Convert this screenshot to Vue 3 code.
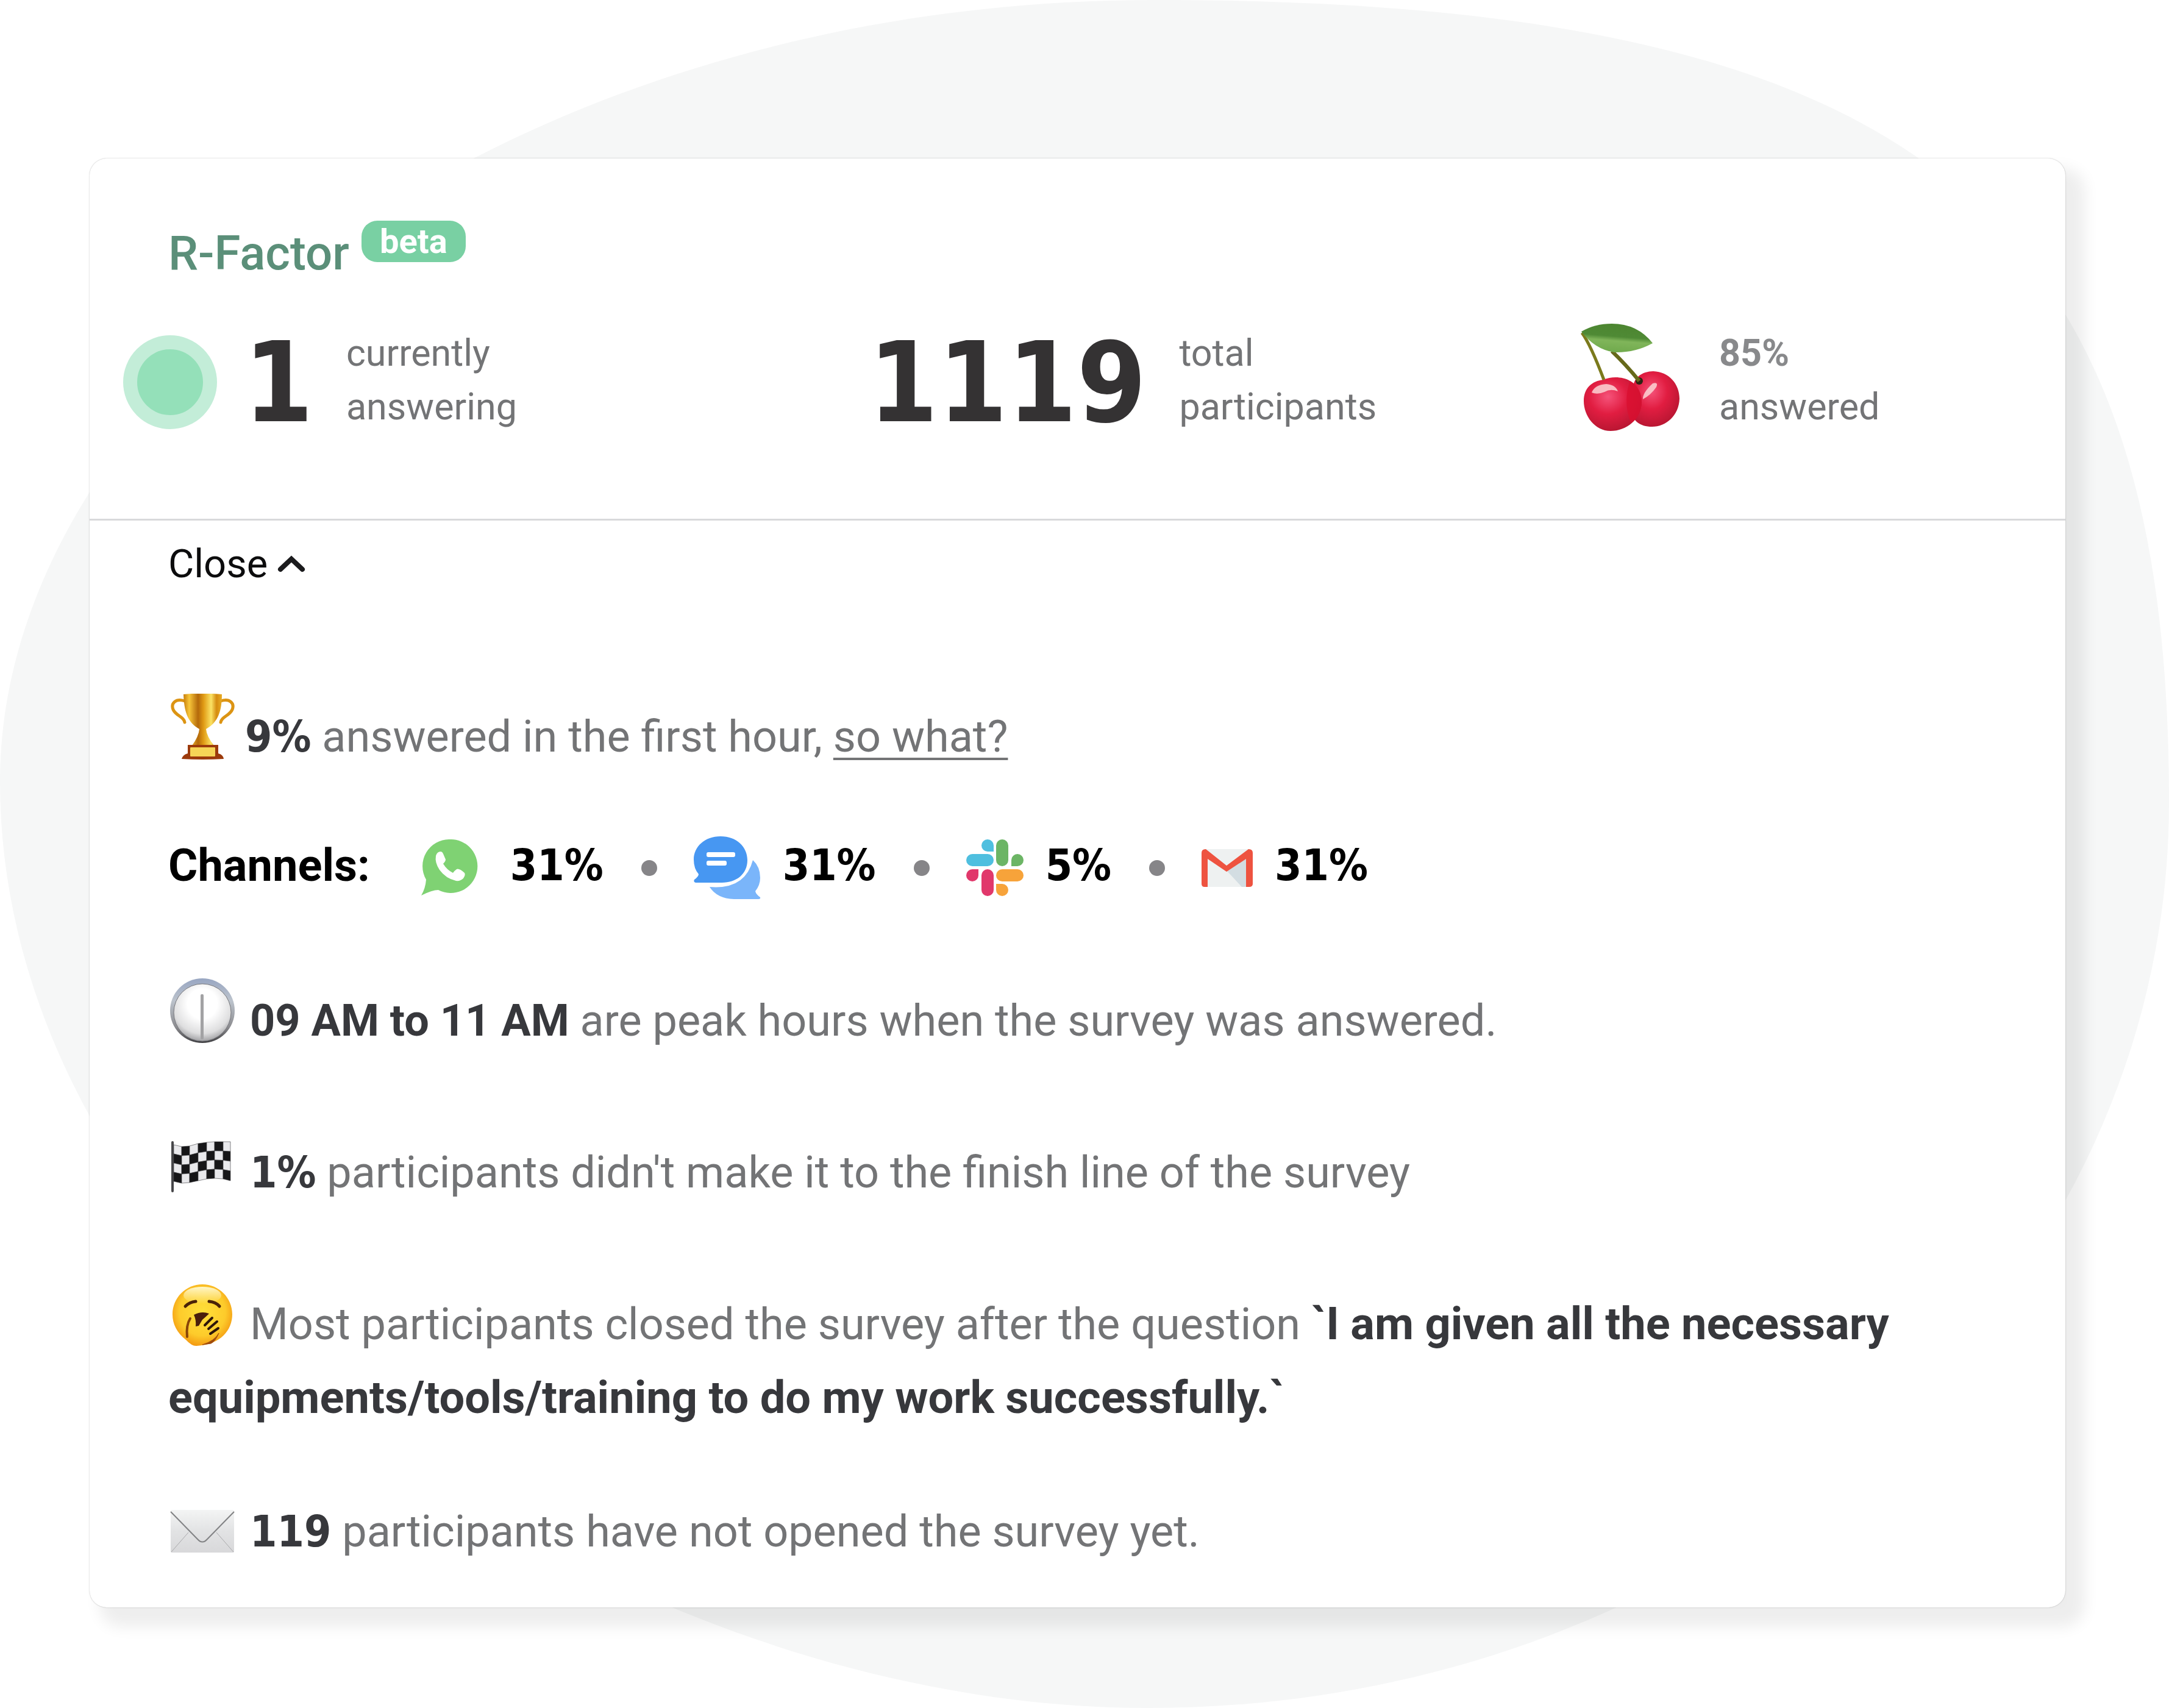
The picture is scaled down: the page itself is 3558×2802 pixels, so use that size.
<template>
  <div class="page">
    <svg class="blob" viewBox="0 0 1568 1235" preserveAspectRatio="none" aria-hidden="true">
      <path
        d="M0 565 C0 280 365 0 835 0 C1390 0 1568 157 1568 580 C1568 942 1238 1235 830 1235 C445 1235 0 935 0 565 Z"
        fill="#f6f7f7"
      />
    </svg>

    <main class="card">
      <header class="card-header">
        <div class="title-row">
          <h1>R-Factor</h1>
          <span class="badge">beta</span>
        </div>

        <div class="stats">
          <div class="stat live">
            <span class="pulse"></span>
            <span class="number">1</span>
            <p class="label">currently<br />answering</p>
          </div>
          <div class="stat">
            <span class="number">1119</span>
            <p class="label">total<br />participants</p>
          </div>
          <div class="stat">
            <svg class="cherry" viewBox="0 0 164 178" aria-hidden="true">
              <defs>
                <linearGradient id="leaf" x1="0.6" y1="0" x2="0.4" y2="1">
                  <stop offset="0" stop-color="#4c8530" />
                  <stop offset="0.45" stop-color="#4f8a35" />
                  <stop offset="0.6" stop-color="#80b55a" />
                  <stop offset="1" stop-color="#6fa94c" />
                </linearGradient>
                <radialGradient id="fruit" cx="0.42" cy="0.36" r="0.65">
                  <stop offset="0" stop-color="#f5537a" />
                  <stop offset="0.5" stop-color="#e11d41" />
                  <stop offset="1" stop-color="#b91632" />
                </radialGradient>
              </defs>
              <path d="M87 108 C86 90 102 79 120 79 C146 80 163 100 163 124 C162 152 141 170 118 170 C98 170 84 160 84 140 Z" fill="url(#fruit)" />
              <path d="M6 128 C6 106 20 95 38 93 C52 87 70 88 82 95 C95 102 101 116 101 130 C100 158 76 177 50 177 C24 177 6 152 6 128 Z" fill="url(#fruit)" />
              <path d="M82 95 C95 102 101 116 101 130 C100 146 94 157 84 164 C74 145 74 115 82 95 Z" fill="#da0f30" opacity="0.8" />
              <path d="M19 114 Q24 101 43 100 Q58 101 62 112 Q50 107 40 113 Q28 118 19 114 Z" fill="#fbd3d5" opacity="0.85" />
              <path d="M103 125 Q102 115 119 99 Q129 96 125 105 Q116 118 103 125 Z" fill="#fbd3d5" opacity="0.85" />
              <ellipse cx="97" cy="95" rx="6" ry="6" fill="#2c2413" />
              <path d="M3 16 Q17 35 39 93" fill="none" stroke="#7b7a1c" stroke-width="5" />
              <path d="M52 46 Q75 68 97 95" fill="none" stroke="#66691a" stroke-width="6" />
              <path d="M2 14 Q24 1 52 1 Q94 1 119 33 Q90 49 56 48 Q24 43 2 14 Z" fill="url(#leaf)" />
            </svg>
            <p class="label"><b>85%</b><br />answered</p>
          </div>
        </div>
      </header>

      <section class="details">
        <button type="button" class="toggle" @click="open = !open">
          {{ open ? 'Close' : 'Open' }}
          <svg class="chevron" :class="{ flipped: !open }" viewBox="0 0 46 28" aria-hidden="true">
            <path d="M5 23 L23 6 L41 23" fill="none" stroke="#1b1b1d" stroke-width="8" stroke-linecap="round" />
          </svg>
        </button>

        <div v-if="open" class="facts">
          <p class="fact first">
            <svg class="emoji" viewBox="0 0 108 108" aria-hidden="true">
              <defs>
                <linearGradient id="gold">
                  <stop offset="0" stop-color="#c77d0a" />
                  <stop offset="0.15" stop-color="#f7c63a" />
                  <stop offset="0.38" stop-color="#b4690a" />
                  <stop offset="0.52" stop-color="#e09a14" />
                  <stop offset="0.72" stop-color="#fbe264" />
                  <stop offset="0.86" stop-color="#d58c10" />
                  <stop offset="1" stop-color="#e8ac25" />
                </linearGradient>
              </defs>
              <path d="M25 12 C10 7 2 16 6 26 C10 36 24 38 25 47 M84 12 C99 7 107 16 103 26 C99 36 85 38 84 47" fill="none" stroke="#dc9413" stroke-width="5" stroke-linecap="round" />
              <path d="M23 1 Q54 -2 86 1 C86 28 80 47 60 58 Q61 70 73 85 H37 Q48 70 49 58 C29 47 24 28 23 1 Z" fill="url(#gold)" />
              <path d="M30 84 H80 V98 Q88 100 89 107 Q54 109 20 107 Q22 100 30 98 Z" fill="#9c3a0c" />
              <rect x="34" y="88" width="41" height="15" rx="1" fill="#f6d557" />
            </svg>
            <b class="figure">9%</b> answered in the first hour, <a href="#">so what?</a>
          </p>

          <div class="channels">
            <h2>Channels:</h2>
            <ul>
              <li>
                <svg class="wide" viewBox="0 0 110 94" aria-hidden="true">
                  <path d="M47 0 A44 44 0 1 1 28 83 Q18 83 0 92 Q7 80 8 66 A44 44 0 0 1 47 0 Z" fill="#7fd273" />
                  <path d="M24 27 Q26 20 32 20 Q35 20 37 26 L40 33 Q40 36 36 40 Q42 50 52 55 Q55 51 58 49 Q62 47 71 55 Q73 58 69 64 Q64 69 57 68 Q40 64 30 50 Q22 38 24 27 Z" fill="#fff" />
                </svg>
                <span class="figure">31%</span>
              </li>
              <li>
                <svg class="wide tall" viewBox="0 0 110 104" aria-hidden="true">
                  <path d="M97 39 Q109 50 109 68 Q109 80 101 90 Q102 95 109 100 Q110 103 106 103 H66 Q38 102 26 83 Q84 88 97 39 Z" fill="#7ab5fa" />
                  <path d="M44 0 C70 0 88 17 88 39 C88 62 70 76 46 76 H3 Q-1 75 1 71 Q8 66 8 62 Q0 53 0 38 C0 17 18 0 44 0 Z" fill="#4797f2" />
                  <rect x="21" y="26" width="47" height="8" rx="3" fill="#fff" />
                  <rect x="21" y="40" width="33" height="8" rx="3" fill="#fff" />
                </svg>
                <span class="figure">31%</span>
              </li>
              <li>
                <svg class="slack" viewBox="0 0 94 94" aria-hidden="true">
                  <path d="M45 20 H35 A10 10 0 1 1 45 10 Z" fill="#4fbfdf" />
                  <rect x="0" y="24" width="45" height="20" rx="10" fill="#4fbfdf" />
                  <rect x="49" y="0" width="20" height="44" rx="10" fill="#6cb565" />
                  <path d="M74 44 V34 A10 10 0 1 1 84 44 Z" fill="#6cb565" />
                  <path d="M20 49 V59 A10 10 0 1 1 10 49 Z" fill="#e1386b" />
                  <rect x="25" y="49" width="20" height="44" rx="10" fill="#e1386b" />
                  <rect x="49" y="49" width="45" height="20" rx="10" fill="#f7a33a" />
                  <path d="M49 73 H59 A10 10 0 1 1 49 83 Z" fill="#f7a33a" />
                </svg>
                <span class="figure">5%</span>
              </li>
              <li>
                <svg class="gmail" viewBox="0 0 84 64" aria-hidden="true">
                  <rect x="1" y="1" width="82" height="62" rx="5" fill="#eef1f1" />
                  <path d="M41 36 L74 10 V63 H66 Z" fill="#d3dde2" />
                  <path d="M0 7 Q0 1 7 1 L41 28 L77 1 Q84 1 84 7 V58 Q84 63 78 63 H73 V17 L41 38 L10 17 V63 H5 Q0 63 0 58 Z" fill="#ee5340" />
                </svg>
                <span class="figure">31%</span>
              </li>
            </ul>
          </div>

          <p class="fact">
            <svg class="emoji" viewBox="0 0 108 108" aria-hidden="true">
              <defs>
                <linearGradient id="rim" x1="0" y1="0" x2="0" y2="1">
                  <stop offset="0" stop-color="#98a6c2" />
                  <stop offset="0.35" stop-color="#bcc3cc" />
                  <stop offset="0.75" stop-color="#8c8c90" />
                  <stop offset="1" stop-color="#3f3f42" />
                </linearGradient>
                <radialGradient id="dial" cx="0.5" cy="0.35" r="0.65">
                  <stop offset="0.4" stop-color="#fff" />
                  <stop offset="0.8" stop-color="#dededf" />
                  <stop offset="1" stop-color="#a3a3a6" />
                </radialGradient>
              </defs>
              <circle cx="54" cy="54" r="53" fill="url(#rim)" />
              <circle cx="54" cy="57" r="47" fill="url(#dial)" stroke="#77787d" stroke-width="1" />
              <rect x="51" y="27" width="5" height="74" rx="2" fill="#a2a2a4" />
            </svg>
            <b>09 AM to 11 AM</b> are peak hours when the survey was answered.
          </p>

          <p class="fact">
            <svg class="emoji" viewBox="0 0 108 108" aria-hidden="true">
              <polygon
                v-for="cell in flagCells"
                :key="cell.points"
                :points="cell.points"
                :fill="cell.fill"
                stroke="#3b3b3e"
                stroke-width="0.6"
              />
              <rect x="3" y="19" width="4" height="84" rx="2" fill="#47474a" />
            </svg>
            <b class="figure">1%</b> participants didn't make it to the finish line of the survey
          </p>

          <p class="fact">
            <svg class="emoji" viewBox="0 0 108 108" aria-hidden="true">
              <defs>
                <radialGradient id="face" cx="0.5" cy="0.45" r="0.55">
                  <stop offset="0" stop-color="#ffe03a" />
                  <stop offset="0.7" stop-color="#fdcb2b" />
                  <stop offset="1" stop-color="#f49c12" />
                </radialGradient>
                <linearGradient id="shine" x1="0" y1="0" x2="0" y2="1">
                  <stop offset="0" stop-color="#fff8c8" />
                  <stop offset="1" stop-color="#fff8c8" stop-opacity="0" />
                </linearGradient>
              </defs>
              <path d="M54 5 C81 5 103 27 103 54 C103 80 84 104 44 106 Q36 106 27 96 C12 84 5 70 5 54 C5 27 27 5 54 5 Z" fill="url(#face)" />
              <ellipse cx="54" cy="23" rx="31" ry="14" fill="url(#shine)" />
              <path d="M26 41 Q33 34 43 33 M65 33 Q76 34 82 41" fill="none" stroke="#4a2208" stroke-width="5" stroke-linecap="round" />
              <path d="M40 55 Q53 48 65 53 Q61 57 54 63 L48 73 L43 74 Q44 63 40 55 Z" fill="#4a1f0c" />
              <path d="M34 61 Q27 72 29 91" fill="none" stroke="#8a4508" stroke-width="4" stroke-linecap="round" />
              <path d="M58 72 L70 60 M64 78 L78 66 M67 86 L80 77" fill="none" stroke="#2e160a" stroke-width="4" stroke-linecap="round" />
              <path d="M54 104 Q74 98 81 85 Q75 99 68 102 Z" fill="#a04b0c" stroke="#a04b0c" />
            </svg>
            <span>Most participants closed the survey after the question</span>
            {{ ' ' }}
            <b class="question">`I am given all the necessary equipments/tools/training to do my work successfully.`</b>
          </p>

          <p class="fact last">
            <svg class="emoji" viewBox="0 0 108 108" aria-hidden="true">
              <defs>
                <linearGradient id="paper" x1="0" y1="0" x2="0" y2="1">
                  <stop offset="0" stop-color="#f3f4f4" />
                  <stop offset="0.5" stop-color="#e2e3e4" />
                  <stop offset="1" stop-color="#d8d8da" />
                </linearGradient>
              </defs>
              <rect x="2" y="35" width="104" height="70" rx="2" fill="url(#paper)" />
              <path d="M31 72 L3 104 M77 72 L105 104" fill="none" stroke="#a9a9ab" stroke-width="1" />
              <path d="M2 38 L46 83 Q54 92 62 83 L106 38" fill="none" stroke="#828385" stroke-width="2" />
            </svg>
            <b class="figure">119</b> participants have not opened the survey yet.
          </p>
        </div>
      </section>
    </main>
  </div>
</template>

<script setup>
import { ref } from 'vue'

const open = ref(true)

// column edges of the waving flag, with the top and bottom of the cloth at each
const edges = [
  { x: 7, top: 25, bottom: 85 },
  { x: 20, top: 28, bottom: 88 },
  { x: 33, top: 27, bottom: 87 },
  { x: 47, top: 23, bottom: 84 },
  { x: 61, top: 21, bottom: 81 },
  { x: 74, top: 20, bottom: 80 },
  { x: 88, top: 20, bottom: 81 },
  { x: 100, top: 20, bottom: 84 }
]

const at = (edge, row) => `${edge.x},${edge.top + ((edge.bottom - edge.top) * row) / 4}`

const flagCells = []
for (let row = 0; row < 4; row++) {
  for (let col = 0; col < 7; col++) {
    const left = edges[col]
    const right = edges[col + 1]
    flagCells.push({
      points: [at(left, row), at(right, row), at(right, row + 1), at(left, row + 1)].join(' '),
      fill: (row + col) % 2 ? '#161618' : '#e9e9ec'
    })
  }
}
</script>

<style>
body {
  margin: 0;
  background: #fff;
}
</style>

<style scoped>
.page {
  position: relative;
  box-sizing: border-box;
  min-height: 100vh;
  padding: 260px 170px 164px 147px;
  font-family: Roboto, "Noto Sans", sans-serif;
  color: #737476;
}

.blob {
  position: absolute;
  top: 0;
  left: 0;
  width: 100%;
  height: 100%;
}

.card {
  position: relative;
  background: #fff;
  border-radius: 28px;
  box-shadow: 0 0 2px rgba(0, 0, 0, 0.3), 24px 24px 24px 8px rgba(0, 0, 0, 0.07);
}

.card-header {
  padding: 102px 129px 140px;
  border-bottom: 3px solid #d8d9db;
}

.title-row {
  display: flex;
  align-items: flex-start;
  gap: 20px;
}

h1 {
  margin: 0;
  font-size: 78px;
  font-weight: 500;
  line-height: 108px;
  color: #5b8f79;
}

.badge {
  padding: 0 30px;
  border-radius: 26px;
  background: #79d0a3;
  color: #fff;
  font-size: 56px;
  font-weight: 700;
  line-height: 68px;
}

.stats {
  display: grid;
  grid-template-columns: 62fr 63fr 36fr;
  margin-top: 65px;
}

.stat {
  display: flex;
  align-items: center;
}

.live {
  margin-left: -74px;
}

.pulse {
  box-sizing: border-box;
  width: 154px;
  height: 154px;
  margin: 8px 44px 0 0;
  border: 23px solid #c3edd8;
  border-radius: 50%;
  background: #94e0b9;
}

.number {
  margin-right: 54px;
  padding-top: 10px;
  font-family: "DejaVu Sans Condensed", "DejaVu Sans", sans-serif;
  font-size: 182px;
  font-stretch: condensed;
  font-weight: 700;
  line-height: 166px;
  color: #343233;
}

.cherry {
  width: 164px;
  height: 178px;
  margin: -8px 64px 0 0;
}

.label {
  margin: 0;
  font-size: 61px;
  line-height: 88px;
  white-space: nowrap;
}

.label b {
  color: #88898b;
}

.details {
  padding: 27px 129px 64px;
}

.toggle {
  display: flex;
  align-items: center;
  gap: 16px;
  padding: 0;
  border: none;
  background: none;
  font: inherit;
  font-size: 65px;
  line-height: 88px;
  color: #0c0c0d;
  cursor: pointer;
}

.chevron {
  width: 46px;
  height: 28px;
}

.flipped {
  transform: rotate(180deg);
}

.fact {
  margin: 0 0 128px;
  font-size: 72px;
  line-height: 121px;
}

.fact.first {
  margin: 179px 0 90px;
}

.fact:nth-last-child(2) {
  margin-bottom: 98px;
}

.fact.last {
  margin-bottom: 0;
}

.fact b {
  line-height: 1;
  color: #37383c;
}

.fact .question {
  font-size: 74px;
}

.fact a {
  color: inherit;
  text-decoration-thickness: 4px;
  text-underline-offset: 10px;
}

.figure {
  font-family: "DejaVu Sans Condensed", "DejaVu Sans", sans-serif;
  font-size: 71px;
  font-stretch: condensed;
}

.emoji {
  width: 108px;
  height: 108px;
  margin: -16px 24px 0 2px;
  vertical-align: -13px;
}

.first .emoji {
  margin-right: 16px;
}

.channels {
  display: flex;
  margin-bottom: 134px;
  font-size: 72px;
  font-weight: 700;
  line-height: 121px;
  color: #000;
}

h2 {
  margin: 0 84px 0 0;
  font-size: 74px;
}

ul {
  display: flex;
  margin: 0;
  padding: 0;
  list-style: none;
}

li {
  display: flex;
  align-items: center;
  gap: 36px;
}

li + li::before {
  content: "";
  width: 26px;
  height: 26px;
  margin: 8px 24px 0 62px;
  border-radius: 50%;
  background: #868588;
}

li svg {
  height: 94px;
  margin-top: 8px;
}

.wide {
  width: 110px;
}

li .tall {
  height: 104px;
}

.slack {
  width: 94px;
}

li .gmail {
  width: 84px;
  height: 64px;
}
</style>
